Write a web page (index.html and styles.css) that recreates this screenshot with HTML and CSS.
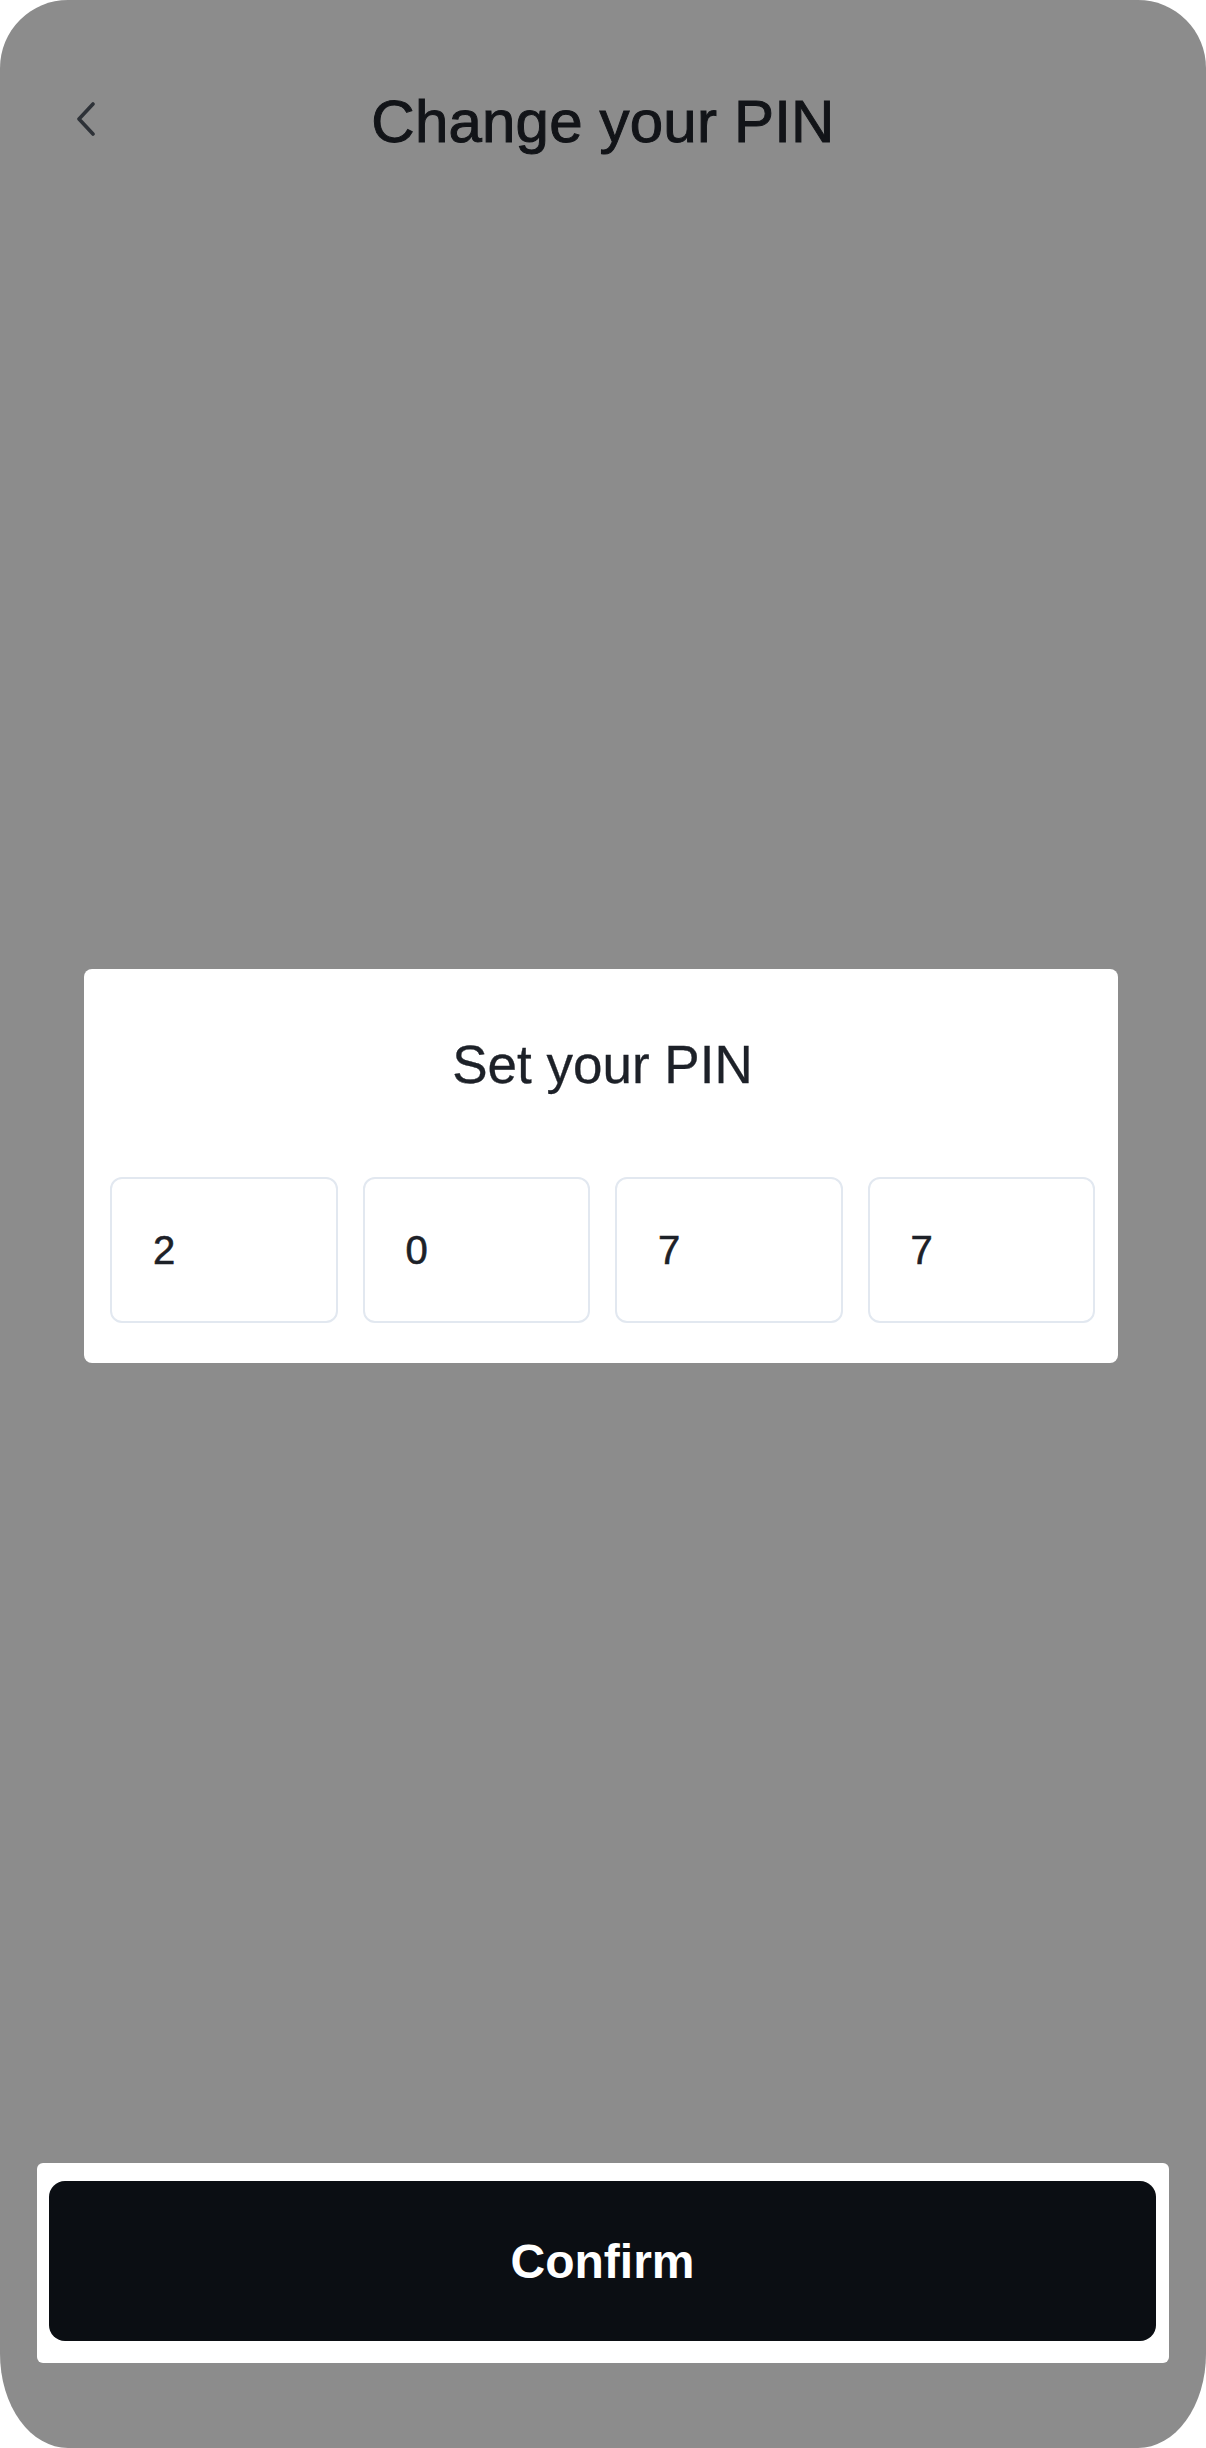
FILE: index.html
```html
<!DOCTYPE html>
<html lang="en">
<head>
<meta charset="utf-8">
<title>Change your PIN</title>
<link rel="stylesheet" href="styles.css">
</head>
<body>
<div class="screen">
  <header class="topbar">
    <button class="back" aria-label="Back">
      <svg width="20" height="34" viewBox="0 0 20 34" fill="none" stroke="#2e3238" stroke-width="3.6" stroke-linecap="round" stroke-linejoin="round"><path d="M17 2 L3 17 L17 32"/></svg>
    </button>
    <h1 class="title">Change your PIN</h1>
    <span class="spacer"></span>
  </header>
  <main class="content">
    <section class="card">
      <h2 class="card-title">Set your PIN</h2>
      <div class="pin-row">
        <div class="pin-box">2</div>
        <div class="pin-box">0</div>
        <div class="pin-box">7</div>
        <div class="pin-box">7</div>
      </div>
    </section>
  </main>
  <footer class="footer">
    <div class="footer-panel">
      <button class="confirm">Confirm</button>
    </div>
  </footer>
</div>
</body>
</html>
```
FILE: styles.css
```css
* { box-sizing: border-box; }
html, body { margin: 0; padding: 0; background: #ffffff; }
body { font-family: "Liberation Sans", Arial, sans-serif; }

.screen {
  width: 1206px;
  height: 2448px;
  background: #8c8c8c;
  border-radius: 68px 68px 68px 68px / 68px 68px 94px 94px;
  display: flex;
  flex-direction: column;
  overflow: hidden;
}

.topbar {
  display: grid;
  grid-template-columns: 1fr auto 1fr;
  padding-top: 88px;
}

.back {
  justify-self: start;
  align-self: start;
  margin: 14px 0 0 76px;
  padding: 0;
  border: 0;
  background: none;
  width: 20px;
  height: 34px;
  display: block;
}
.back svg { display: block; }

.title {
  margin: 0;
  font-size: 60px;
  line-height: 68px;
  font-weight: 400;
  color: #121418;
  -webkit-text-stroke: 1px #121418;
  letter-spacing: 0.2px;
}

.content {
  flex: 1;
  display: flex;
  flex-direction: column;
  justify-content: center;
  padding: 13px 88px 0 84px;
}

.card {
  background: #ffffff;
  border-radius: 8px;
  padding: 66px 23px 40px 26px;
}

.card-title {
  margin: 0;
  text-align: center;
  font-size: 53px;
  line-height: 60px;
  font-weight: 400;
  color: #1d2128;
  -webkit-text-stroke: 0.3px #1d2128;
}

.pin-row {
  display: flex;
  gap: 25px;
  margin-top: 82px;
}

.pin-box {
  flex: 1;
  height: 146px;
  border: 2px solid #e2e8f0;
  border-radius: 12px;
  display: flex;
  align-items: center;
  padding-left: 41px;
  font-size: 40px;
  color: #1d2128;
  -webkit-text-stroke: 0.6px #1d2128;
}

.footer {
  padding: 0 37px 85px 37px;
}

.footer-panel {
  background: #ffffff;
  border-radius: 6px;
  padding: 18px 13px 22px 12px;
}

.confirm {
  display: block;
  width: 100%;
  height: 160px;
  border: 0;
  border-radius: 16px;
  background: #0b0e13;
  color: #ffffff;
  font-family: "Liberation Sans", Arial, sans-serif;
  font-size: 48px;
  font-weight: 700;
}
```
